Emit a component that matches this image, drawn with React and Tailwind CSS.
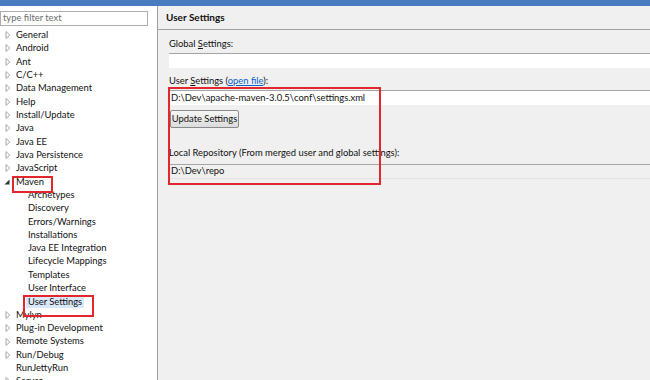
import React from 'react';

const top1 = ['General', 'Android', 'Ant', 'C/C++', 'Data Management', 'Help', 'Install/Update', 'Java', 'Java EE', 'Java Persistence', 'JavaScript'];
const mavenKids = ['Archetypes', 'Discovery', 'Errors/Warnings', 'Installations', 'Java EE Integration', 'Lifecycle Mappings', 'Templates', 'User Interface'];
const top2 = ['Mylyn', 'Plug-in Development', 'Remote Systems', 'Run/Debug'];

function Closed() {
  return (
    <svg width="6" height="8" viewBox="0 0 6 8" className="ml-[5px] mr-[5px] shrink-0">
      <path d="M1 0.5 L4.8 4 L1 7.5 Z" fill="#fff" stroke="#a6a6a6" strokeWidth="1" />
    </svg>
  );
}

function Open() {
  return (
    <svg width="6" height="8" viewBox="0 0 6 8" className="ml-[4px] mr-[6px] shrink-0">
      <path d="M5.5 1.5 L5.5 6.5 L0.5 6.5 Z" fill="#333" />
    </svg>
  );
}

function Row({ children, arrow }) {
  return (
    <div className="h-[13.33px] flex items-center whitespace-nowrap">
      {arrow === 'open' ? <Open /> : arrow === 'none' ? <span className="w-[16px] shrink-0" /> : <Closed />}
      <span>{children}</span>
    </div>
  );
}

function Kid({ children, selected }) {
  return (
    <div className="h-[13.33px] flex items-center whitespace-nowrap pl-[26px]">
      <span className={selected ? 'bg-[#d9e8fb] px-[2px] leading-[12px]' : 'px-[2px]'}>{children}</span>
    </div>
  );
}

function Field({ children, gray }) {
  return (
    <div className={`h-[15px] border-t border-[#a5a5a5] flex items-center pl-[2px] ${gray ? 'bg-[#f0f0f0] border-b border-b-[#e3e3e3]' : 'bg-white'}`}>
      <span>{children}</span>
    </div>
  );
}

export default function App() {
  return (
    <div className="relative w-[650px] h-[380px] overflow-hidden bg-[#f0f0f0] text-[9.4px] text-[#111] flex flex-col" style={{ fontFamily: 'Lato, "Liberation Sans", sans-serif' }}>
      <div className="h-[6px] bg-[#4a7bc0] shrink-0" />
      <div className="flex flex-1 min-h-0">
        <div className="w-[158px] shrink-0 bg-white border-r border-[#a0a0a0]">
          <div className="pt-[5px] pr-[9px]">
            <div className="h-[15px] border border-[#abadb3] flex items-center pl-[2px] text-[#6d6d6d]">type filter text</div>
          </div>
          <div className="pt-[2.3px]">
            {top1.map(t => <Row key={t}>{t}</Row>)}
            <Row arrow="open">Maven</Row>
            {mavenKids.map(t => <Kid key={t}>{t}</Kid>)}
            <Kid selected>User Settings</Kid>
            {top2.map(t => <Row key={t}>{t}</Row>)}
            <Row arrow="none">RunJettyRun</Row>
            <Row>Server</Row>
          </div>
        </div>
        <div className="flex-1 flex flex-col">
          <div className="h-[24px] border-b border-[#a0a0a0] flex items-center pl-[8px] font-bold text-[10px]">User Settings</div>
          <div className="pl-[11px] pt-[6px]">
            <div className="h-[16px] flex items-center"><span>Global <span className="underline">S</span>ettings:</span></div>
            <div className="mt-[1px]"><Field /></div>
            <div className="h-[22px] flex items-end pb-[2px]"><span>User <span className="underline">S</span>ettings (<span className="text-[#0b5fcc] underline">open file</span>):</span></div>
            <Field>D:\Dev\apache-maven-3.0.5\conf\settings.xml</Field>
            <div className="pt-[5px] pl-[1px]">
              <div className="w-[69px] h-[18px] whitespace-nowrap border border-[#8a8a8a] rounded-[2px] bg-gradient-to-b from-[#f6f6f6] to-[#dcdcdc] flex items-center justify-center">Update Settings</div>
            </div>
            <div className="h-[36px] flex items-end pb-[4px]"><span>Local Repository (From merged user and global settings):</span></div>
            <Field gray>D:\Dev\repo</Field>
          </div>
        </div>
      </div>
      <div className="absolute left-[12px] top-[176px] w-[41px] h-[17px] border-2 border-[#e3262c]" />
      <div className="absolute left-[23px] top-[295px] w-[71px] h-[22px] border-2 border-[#e3262c]" />
      <div className="absolute left-[168px] top-[87px] w-[213px] h-[98px] border-2 border-[#e3262c]" />
    </div>
  );
}
